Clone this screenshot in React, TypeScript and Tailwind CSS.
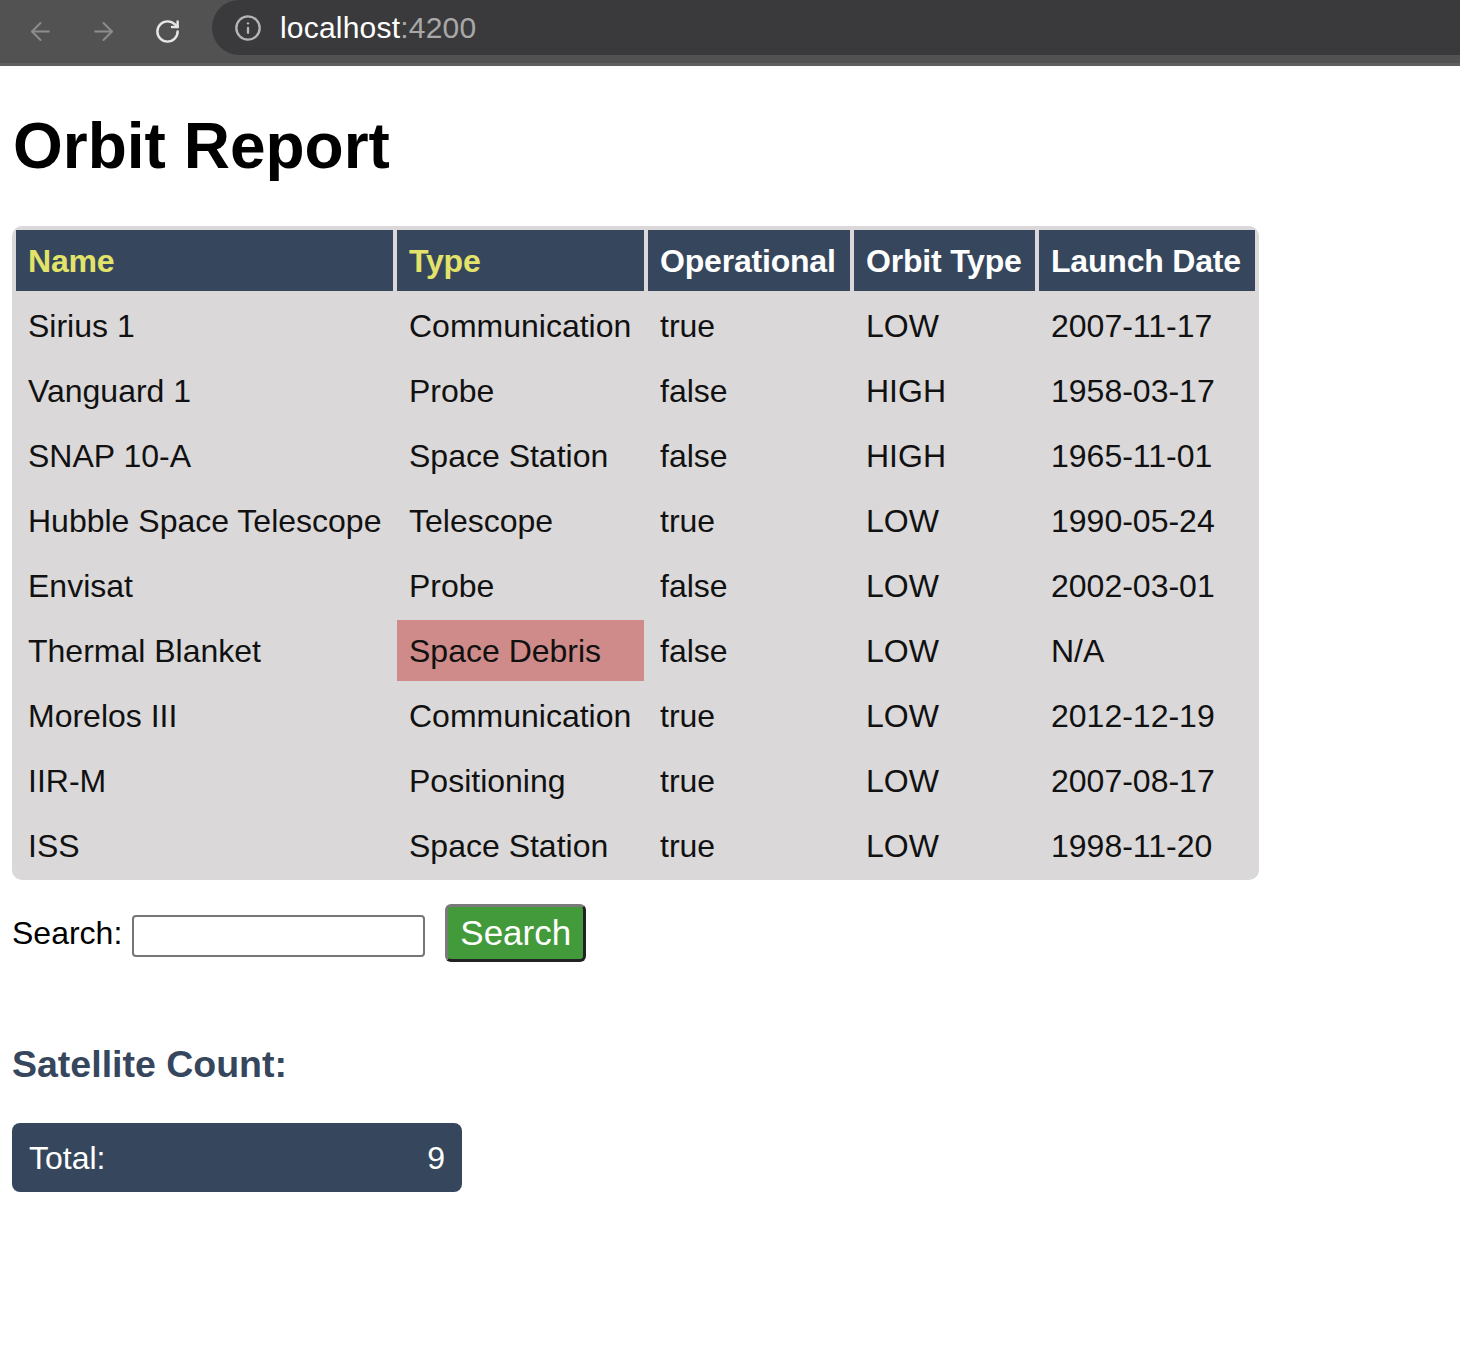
import React from 'react'
import { ArrowLeft, ArrowRight, RotateCw, Info } from 'lucide-react'

const satellites = [
  { name: 'Sirius 1', type: 'Communication', operational: 'true', orbit: 'LOW', date: '2007-11-17' },
  { name: 'Vanguard 1', type: 'Probe', operational: 'false', orbit: 'HIGH', date: '1958-03-17' },
  { name: 'SNAP 10-A', type: 'Space Station', operational: 'false', orbit: 'HIGH', date: '1965-11-01' },
  { name: 'Hubble Space Telescope', type: 'Telescope', operational: 'true', orbit: 'LOW', date: '1990-05-24' },
  { name: 'Envisat', type: 'Probe', operational: 'false', orbit: 'LOW', date: '2002-03-01' },
  { name: 'Thermal Blanket', type: 'Space Debris', operational: 'false', orbit: 'LOW', date: 'N/A' },
  { name: 'Morelos III', type: 'Communication', operational: 'true', orbit: 'LOW', date: '2012-12-19' },
  { name: 'IIR-M', type: 'Positioning', operational: 'true', orbit: 'LOW', date: '2007-08-17' },
  { name: 'ISS', type: 'Space Station', operational: 'true', orbit: 'LOW', date: '1998-11-20' },
]

function BrowserBar() {
  return (
    <div className="flex flex-col">
      <div className="h-[63px] bg-[#525252] flex items-center">
        <div className="flex items-center w-[212px] shrink-0">
          <ArrowLeft className="ml-[26px] text-[#8d8d8d]" size={29} strokeWidth={1.6} />
          <ArrowRight className="ml-[34px] text-[#8d8d8d]" size={29} strokeWidth={1.6} />
          <RotateCw className="ml-[36px] text-[#e6e6e6]" size={27} strokeWidth={2.2} />
        </div>
        <div className="flex-1 h-[55px] mt-[-8px] bg-[#3a3a3c] rounded-l-full flex items-center">
          <Info className="ml-[22px] text-[#b5b5b5]" size={28} strokeWidth={2} />
          <span className="ml-[18px] text-[30px] text-white tracking-[0.2px]">
            localhost<span className="text-[#a8a8a8]">:4200</span>
          </span>
        </div>
      </div>
      <div className="h-[3px] bg-[#5f5f5f]" />
    </div>
  )
}

export default function App() {
  const headers = [
    { label: 'Name', w: 'w-[377px]', yellow: true },
    { label: 'Type', w: 'w-[247px]', yellow: true },
    { label: 'Operational', w: 'w-[202px]', yellow: false },
    { label: 'Orbit Type', w: 'w-[181px]', yellow: false },
    { label: 'Launch Date', w: 'w-[216px]', yellow: false },
  ]

  return (
    <div className="min-h-[1372px] bg-white font-['Liberation_Sans',Arial,sans-serif] text-[#111]">
      <BrowserBar />
      <div className="px-[12px]">
        <h1 className="mt-[43px] text-[64px] font-bold leading-[74px] text-black ml-[1px]">Orbit Report</h1>

        <table className="mt-[43px] w-[1247px] border-separate border-spacing-[4px] bg-[#dad8d9] rounded-[10px] text-[32px] table-fixed whitespace-nowrap">
          <thead>
            <tr>
              {headers.map((h) => (
                <th
                  key={h.label}
                  className={`${h.w} h-[61px] px-[12px] text-left font-bold tracking-[-0.2px] bg-[#36475d] ${h.yellow ? 'text-[#e3e36a]' : 'text-white'}`}
                >
                  {h.label}
                </th>
              ))}
            </tr>
          </thead>
          <tbody>
            {satellites.map((s) => (
              <tr key={s.name}>
                <td className="h-[61px] px-[12px]">{s.name}</td>
                <td className={`h-[61px] px-[12px] ${s.type === 'Space Debris' ? 'bg-[#cf8b89]' : ''}`}>{s.type}</td>
                <td className="h-[61px] px-[12px]">{s.operational}</td>
                <td className="h-[61px] px-[12px]">{s.orbit}</td>
                <td className="h-[61px] px-[12px]">{s.date}</td>
              </tr>
            ))}
          </tbody>
        </table>

        <div className="mt-[24px] flex items-center h-[58px]">
          <span className="text-[32px] text-black">Search:</span>
          <input
            type="text"
            className="ml-[10px] mt-[6px] w-[293px] h-[42px] border-2 border-[#767676] rounded-[4px] bg-white"
          />
          <button className="ml-[20px] h-[58px] px-[12px] bg-[#439a3a] text-white text-[35px] rounded-[6px] border-[3px] border-t-[#7a7a7a] border-l-[#7a7a7a] border-b-[#222] border-r-[#222]">
            Search
          </button>
        </div>

        <h3 className="mt-[80px] text-[37.5px] font-bold text-[#36475d] leading-[44px]">Satellite Count:</h3>

        <div className="mt-[37px] w-[450px] h-[69px] bg-[#36475d] rounded-[8px] flex items-center justify-between px-[17px] text-white text-[32px]">
          <span>Total:</span>
          <span>9</span>
        </div>
      </div>
    </div>
  )
}
